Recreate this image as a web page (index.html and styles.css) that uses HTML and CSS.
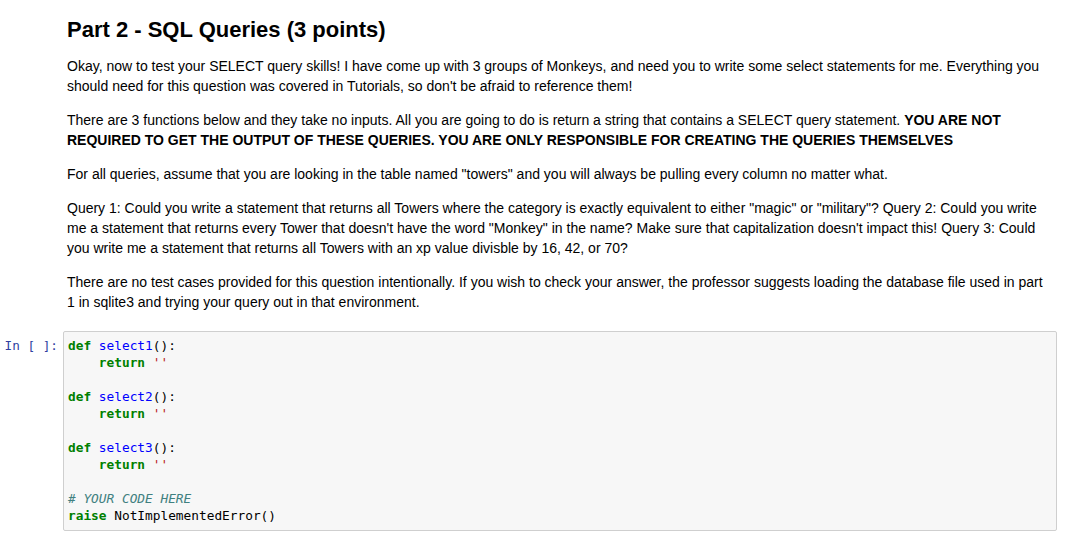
FILE: index.html
```html
<!DOCTYPE html>
<html>
<head>
<meta charset="utf-8">
<link rel="stylesheet" href="styles.css">
</head>
<body>
<div class="notebook">
  <div class="cell">
    <div class="prompt"></div>
    <div class="markdown">
      <h2 class="title">Part 2 - SQL Queries (3 points)</h2>
      <p class="para first">Okay, now to test your SELECT query skills! I have come up with 3 groups of Monkeys, and need you to write some select statements for me. Everything you should need for this question was covered in Tutorials, so don't be afraid to reference them!</p>
      <p class="para">There are 3 functions below and they take no inputs. All you are going to do is return a string that contains a SELECT query statement. <strong>YOU ARE NOT REQUIRED TO GET THE OUTPUT OF THESE QUERIES. YOU ARE ONLY RESPONSIBLE FOR CREATING THE QUERIES THEMSELVES</strong></p>
      <p class="para">For all queries, assume that you are looking in the table named "towers" and you will always be pulling every column no matter what.</p>
      <p class="para">Query 1: Could you write a statement that returns all Towers where the category is exactly equivalent to either "magic" or "military"? Query 2: Could you write me a statement that returns every Tower that doesn't have the word "Monkey" in the name? Make sure that capitalization doesn't impact this! Query 3: Could you write me a statement that returns all Towers with an xp value divisble by 16, 42, or 70?</p>
      <p class="para">There are no test cases provided for this question intentionally. If you wish to check your answer, the professor suggests loading the database file used in part 1 in sqlite3 and trying your query out in that environment.</p>
    </div>
  </div>
  <div class="cell code-cell">
    <div class="prompt in-prompt">In&nbsp;[&nbsp;]:</div>
    <pre class="code"><span class="kw">def</span> <span class="fn">select1</span>():
    <span class="kw">return</span> <span class="str">''</span>

<span class="kw">def</span> <span class="fn">select2</span>():
    <span class="kw">return</span> <span class="str">''</span>

<span class="kw">def</span> <span class="fn">select3</span>():
    <span class="kw">return</span> <span class="str">''</span>

<span class="cm"># YOUR CODE HERE</span>
<span class="kw">raise</span> NotImplementedError()</pre>
  </div>
</div>
</body>
</html>
```

FILE: styles.css
```css
html, body {
  margin: 0;
  padding: 0;
  background: #ffffff;
}

body {
  font-family: "Liberation Sans", Arial, sans-serif;
  color: #000000;
}

.notebook {
  width: 1057px;
  padding-top: 17px;
}

.cell {
  display: flex;
  flex-direction: row;
}

.prompt {
  width: 63px;
  flex: none;
  box-sizing: border-box;
}

.markdown {
  width: 994px;
  box-sizing: border-box;
  padding: 0 6px 0 4px;
}

.title {
  font-size: 22px;
  line-height: 26px;
  font-weight: bold;
  margin: 0;
}

.para {
  font-size: 14px;
  line-height: 20px;
  margin: 14px 0 0 0;
}

.para.first {
  margin-top: 13px;
}

.para strong {
  font-weight: bold;
}

.code-cell {
  margin-top: 19px;
}

.in-prompt {
  font-family: "DejaVu Sans Mono", monospace;
  font-size: 12.7px;
  line-height: 17px;
  color: #303f9f;
  text-align: right;
  padding: 6px 5px 0 0;
}

.code {
  width: 994px;
  height: 200px;
  box-sizing: border-box;
  margin: 0;
  background: #f7f7f7;
  border: 1px solid #cfcfcf;
  border-radius: 2px;
  padding: 5px 4px 6px 4px;
  font-family: "DejaVu Sans Mono", monospace;
  font-size: 12.8px;
  line-height: 17px;
  color: #000000;
  white-space: pre;
}

.kw {
  color: #008000;
  font-weight: bold;
}

.fn {
  color: #0000ff;
}

.str {
  color: #ba2121;
}

.cm {
  color: #408080;
  font-style: italic;
}
```
